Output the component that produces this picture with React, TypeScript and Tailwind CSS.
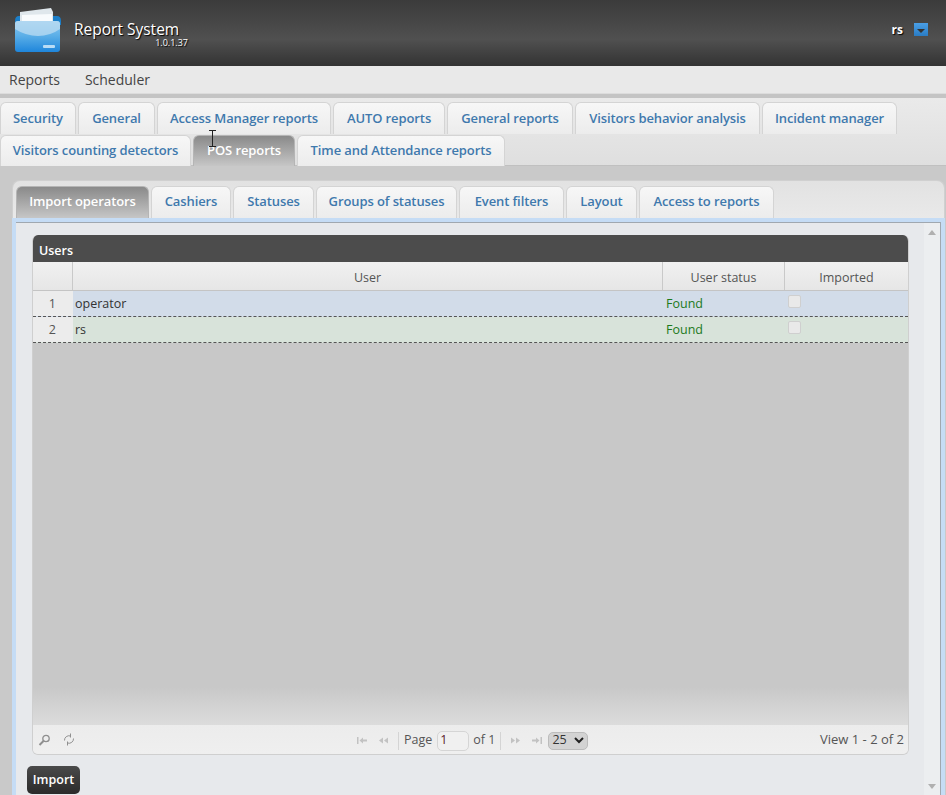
const font = "font-['Open_Sans','Noto_Sans',sans-serif]";

const topRow = [
  { label: "Security", w: "w-[76px]" },
  { label: "General", w: "w-[77px]" },
  { label: "Access Manager reports", w: "w-[174px]" },
  { label: "AUTO reports", w: "w-[112px]" },
  { label: "General reports", w: "w-[126px]" },
  { label: "Visitors behavior analysis", w: "w-[185px]" },
  { label: "Incident manager", w: "w-[135px]" },
];

const secondRow = [
  { label: "Visitors counting detectors", w: "w-[191px]", active: false },
  { label: "POS reports", w: "w-[102px]", active: true },
  { label: "Time and Attendance reports", w: "w-[208px]", active: false },
];

const subTabs = [
  { label: "Import operators", w: "w-[133px]", active: true },
  { label: "Cashiers", w: "w-[80px]", active: false },
  { label: "Statuses", w: "w-[81px]", active: false },
  { label: "Groups of statuses", w: "w-[141px]", active: false },
  { label: "Event filters", w: "w-[105px]", active: false },
  { label: "Layout", w: "w-[71px]", active: false },
  { label: "Access to reports", w: "w-[135px]", active: false },
];

const users = [
  { n: 1, name: "operator", rowBg: "bg-[#d2dce9]" },
  { n: 2, name: "rs", rowBg: "bg-[#d8e3da]" },
];

function Logo() {
  return (
    <svg width="48" height="46" viewBox="0 0 48 46" className="shrink-0">
      <defs>
        <linearGradient id="folderBody" x1="0" y1="0" x2="0" y2="1">
          <stop offset="0" stopColor="#8cc6ee" />
          <stop offset="0.45" stopColor="#5db0e8" />
          <stop offset="1" stopColor="#1f86db" />
        </linearGradient>
      </defs>
      <path d="M1 14q0-5 4-5h38q4 0 4 5v4H1z" fill="#1c7fc9" />
      <path d="M6 5l31-4 2 4v11H6z" fill="#dfe7ec" />
      <path d="M8 8l30-1v8H8z" fill="#f8fbfd" />
      <rect x="1" y="14" width="45" height="31" rx="3" fill="url(#folderBody)" />
      <path d="M1 17q0-3 3-3h39q3 0 3 3v5q-10 7-22 7t-23-7z" fill="#bcdcf1" opacity="0.75" />
      <rect x="29" y="38" width="12" height="3" rx="1" fill="#b9dcf5" />
    </svg>
  );
}

function tabTone(active: boolean) {
  return active
    ? "border-[#b5b5b5] bg-gradient-to-b from-[#8a8a8a] to-[#c6c6c6] text-white"
    : "border-[#d4d4d4] bg-gradient-to-b from-[#f7f7f7] to-[#ececec] text-[#3f79ad]";
}

function PagerArrow({ flip = false, bar = false }: { flip?: boolean; bar?: boolean }) {
  return (
    <svg width="22" height="9" viewBox="0 0 22 9" className={flip ? "-scale-x-100" : ""} fill="#c2c2c2">
      {bar ? (
        <>
          <rect x="6" y="1" width="1.500" height="7" />
          <path d="M8.500 4.500L12 1.500v6zM12 3.500h4v2h-4z" />
        </>
      ) : (
        <path d="M6 4.500L10 1.500v6zM11 4.500L15 1.500v6z" />
      )}
    </svg>
  );
}

function App() {
  return (
    <div className={`relative h-[795px] w-[946px] overflow-hidden bg-[#c9c9c9] text-[14px] ${font}`}>
      {/* Header */}
      <div className="flex h-[66px] bg-gradient-to-b from-[#3b3b3b] via-[#505050] via-60% to-[#333333] pl-[14px] pt-[7px] pr-[18px]">
        <Logo />
        <div className="ml-[12px] w-[114px] pt-[13px] text-white">
          <div className="text-[15.500px] leading-[18px] whitespace-nowrap [text-shadow:1px_1px_1px_#000]">Report System</div>
          <div className="text-right text-[9px] leading-[10px] [text-shadow:1px_1px_1px_#000]">1.0.1.37</div>
        </div>
        <div className="ml-auto mt-[12px] flex h-[20px] items-center gap-[11px] pt-[1px]">
          <span className="text-[12px] font-bold leading-none text-white [text-shadow:1px_1px_1px_#000]">rs</span>
          <span className="flex h-[13px] w-[14px] items-center justify-center bg-gradient-to-b from-[#4a9fe6] to-[#2a7cc4]">
            <span className="mt-[2px] border-x-[4px] border-t-[4px] border-x-transparent border-t-[#333]" />
          </span>
        </div>
      </div>

      {/* Menu */}
      <div className="flex h-[28px] items-center gap-[25px] border-b border-[#dcdcdc] bg-[#e9e9e9] pl-[9px] text-[#444]">
        <span>Reports</span>
        <span>Scheduler</span>
      </div>

      {/* Top level tabs */}
      <div className="h-[4px] bg-[#c4c4c4]" />
      <div className="h-[68px] border-b border-[#c0c0c0] bg-gradient-to-b from-[#eaeaea] to-[#dfdfdf] pt-[4px] text-[13px] font-semibold tracking-[-0.1px]">
        <div className="flex h-[32px] gap-[2px]">
          {topRow.map((t) => (
            <div key={t.label} className={`flex ${t.w} items-center justify-center rounded-t-[6px] border border-b-0 ${tabTone(false)}`}>
              {t.label}
            </div>
          ))}
        </div>
        <div className="mt-[1px] flex h-[31px] gap-[2px]">
          {secondRow.map((t) => (
            <div key={t.label} className={`flex ${t.w} items-center justify-center rounded-t-[6px] border border-b-0 ${tabTone(t.active)}`}>
              {t.label}
            </div>
          ))}
        </div>
      </div>

      {/* Sub tabs */}
      <div className="ml-[12px] mt-[14px] flex h-[38px] w-[933px] gap-[2px] rounded-t-[8px] border border-b-0 border-[#d0d0d0] bg-gradient-to-b from-[#e2e2e2] to-[#e9e9e9] pl-[3px] pt-[5px] text-[13px] font-semibold tracking-[-0.1px]">
        {subTabs.map((t) => (
          <div key={t.label} className={`flex ${t.w} items-center justify-center rounded-t-[6px] border border-b-0 pb-[1px] ${tabTone(t.active)}`}>
            {t.label}
          </div>
        ))}
      </div>

      {/* Panel */}
      <div className="ml-[12px] h-[577px] w-[933px] border-x-4 border-t-4 border-[#c5dcf5]">
        <div className="flex h-full border-r border-t border-[#a0a8b0] bg-[#e7e9ec]">
          <div className="min-w-0 flex-1 pl-[11px]">
            {/* Users grid */}
            <div className="ml-[5px] mt-[12px] w-[877px] overflow-hidden rounded-[6px] border-x border-b border-[#cfcfcf]">
              <div className="flex h-[27px] items-center bg-[#4c4c4c] pl-[6px] pt-[5px] text-[12.500px] font-semibold text-white">Users</div>
              <div className="flex h-[29px] border-b border-[#c4c4c4] bg-gradient-to-b from-[#f1f1f1] to-[#e6e6e6] pt-[5px] text-[12.500px] text-[#555]">
                <div className="-mt-[5px] w-[40px] border-r border-[#c9c9c9]" />
                <div className="-mt-[5px] flex w-[590px] items-center justify-center border-r border-[#c9c9c9] pt-[5px]">User</div>
                <div className="-mt-[5px] flex w-[122px] items-center justify-center border-r border-[#c9c9c9] pt-[5px]">User status</div>
                <div className="flex flex-1 items-center justify-center">Imported</div>
              </div>
              {users.map((u) => (
                <div key={u.n} className={`flex h-[26px] border-b border-dashed border-[#555] text-[12.500px] ${u.rowBg}`}>
                  <div className="flex w-[40px] items-center justify-end bg-[#ececec] pr-[17px] pt-[2px] text-[#555]">{u.n}</div>
                  <div className="flex w-[590px] items-center pl-[2px] pt-[2px] text-[#333]">{u.name}</div>
                  <div className="flex w-[122px] items-center pl-[3px] pt-[2px] text-[#1c7a1c]">Found</div>
                  <div className="flex-1 pl-[3px] pt-[4px]">
                    <div className="h-[13px] w-[13px] rounded-[2px] border border-[#cfcfcf] bg-[#e9e9e9]" />
                  </div>
                </div>
              ))}
              <div className="h-[382px] bg-gradient-to-b from-[#c8c8c8] from-90% to-[#dcdcdc]" />
              {/* Pager */}
              <div className="relative flex h-[29px] items-center bg-gradient-to-b from-[#ececec] to-[#efefef] text-[12.500px] text-[#555]">
                <svg width="13" height="12" viewBox="0 0 13 12" className="ml-[5px]" fill="none" stroke="#8f8f8f">
                  <circle cx="8" cy="4.500" r="3.200" strokeWidth="1.300" />
                  <path d="M5.500 7L1.500 11" strokeWidth="2" />
                </svg>
                <svg width="12" height="13" viewBox="0 0 12 13" className="ml-[12px]" fill="none" stroke="#8f8f8f">
                  <path d="M1.500 7.500a4.500 4.500 0 0 1 6-4.500M10.500 5.500a4.500 4.500 0 0 1-6 4.500" />
                  <path d="M7.500 .5v4M4.500 8.500v4" strokeWidth="1" />
                </svg>
                <div className="absolute left-[318px] top-[1px] flex h-full items-center">
                  <PagerArrow bar />
                  <PagerArrow />
                  <span className="ml-[3px] h-[18px] border-l border-[#d4d4d4]" />
                  <span className="ml-[5px]">Page</span>
                  <span className="ml-[5px] flex h-[20px] w-[32px] items-center rounded-[5px] border border-[#d5d5d5] bg-[#f0f0f0] pl-[2px] text-[#5a1a2a]">1</span>
                  <span className="ml-[4px]">of 1</span>
                  <span className="ml-[5px] h-[18px] border-l border-[#d4d4d4]" />
                  <span className="ml-[3px]"><PagerArrow flip /></span>
                  <PagerArrow flip bar />
                  <span className="flex h-[18px] w-[40px] items-center justify-between rounded-[5px] border border-[#bcbcbc] bg-[#d3d3d3] px-[3px] text-[#333]">
                    25
                    <svg width="10" height="7" viewBox="0 0 10 7" fill="none" stroke="#222" strokeWidth="2"><path d="M1 1l4 4 4-4" /></svg>
                  </span>
                </div>
                <span className="ml-auto pr-[4px] pt-[1px] text-[13px]">View 1 - 2 of 2</span>
              </div>
            </div>
            <button className="mt-[11px] flex h-[28px] w-[53px] items-center justify-center rounded-[5px] bg-gradient-to-b from-[#4a4a4a] to-[#2b2b2b] text-[12.500px] font-semibold text-white">
              Import
            </button>
          </div>
          {/* Scrollbar */}
          <div className="flex w-[16px] flex-col items-center justify-between bg-[#eceef0] pb-[6px] pt-[7px]">
            <span className="border-x-[4px] border-b-[5px] border-x-transparent border-b-[#b0b0b0]" />
            <span className="border-x-[4px] border-t-[5px] border-x-transparent border-t-[#b0b0b0]" />
          </div>
        </div>
      </div>

      {/* Text cursor left on top of the tabs */}
      <svg width="9" height="17" viewBox="0 0 9 17" className="absolute left-[208px] top-[130px]" fill="none" stroke="#222">
        <path d="M1 .5h7M4.500 .5v16M1 16.500h7" />
      </svg>
    </div>
  );
}

export default App;
